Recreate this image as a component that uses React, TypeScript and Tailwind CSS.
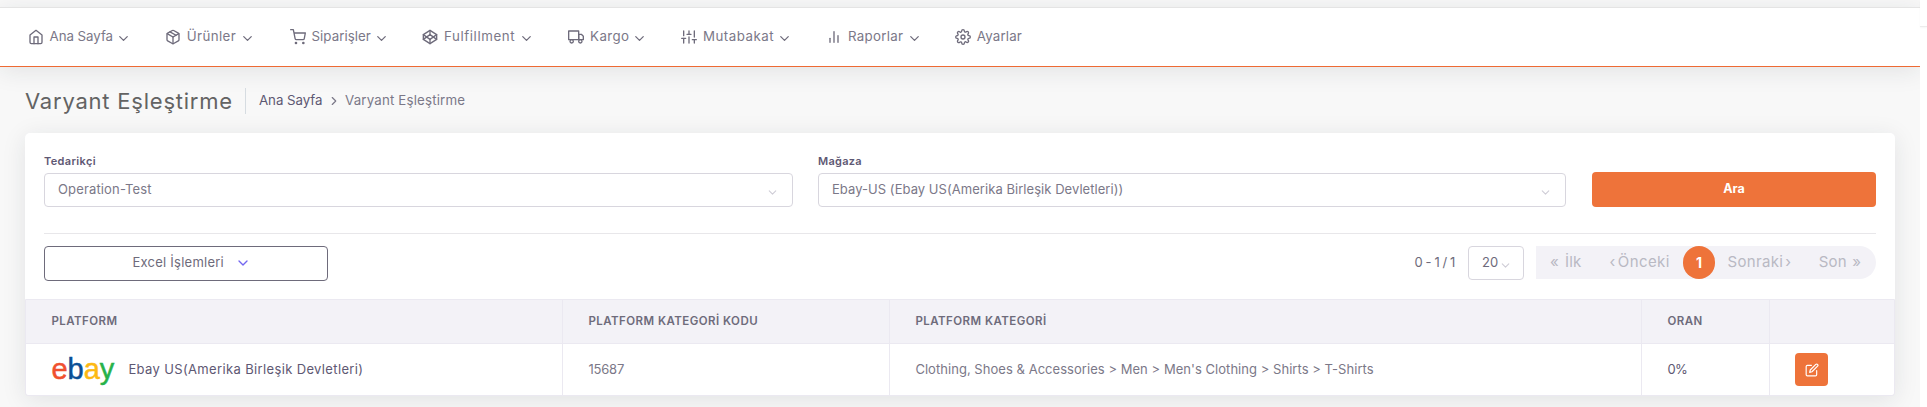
import React from "react";
import {
  FiBarChart2,
  FiChevronDown,
  FiChevronRight,
  FiCodepen,
  FiEdit,
  FiHome,
  FiPackage,
  FiSettings,
  FiShoppingCart,
  FiSliders,
  FiTruck,
} from "react-icons/fi";
import type { IconType } from "react-icons";

type NavEntry = { icon: IconType; label: string; box: string; text: string; menu: boolean };

const nav: NavEntry[] = [
  { icon: FiHome, label: "Ana Sayfa", box: "w-[137.2px]", text: "w-[66.6px] tracking-[-0.06px]", menu: true },
  { icon: FiPackage, label: "Ürünler", box: "w-[124.7px]", text: "w-[53.4px] tracking-[0.4px]", menu: true },
  { icon: FiShoppingCart, label: "Siparişler", box: "w-[132.6px]", text: "w-[62.7px] tracking-[0.05px]", menu: true },
  { icon: FiCodepen, label: "Fulfillment", box: "w-[146px]", text: "w-[75px] tracking-[0.58px]", menu: true },
  { icon: FiTruck, label: "Kargo", box: "w-[112.9px]", text: "w-[42.3px] tracking-[0.38px]", menu: true },
  { icon: FiSliders, label: "Mutabakat", box: "w-[145px]", text: "w-[74.1px] tracking-[0.5px]", menu: true },
  { icon: FiBarChart2, label: "Raporlar", box: "w-[128.8px]", text: "w-[59.2px] tracking-[0.28px]", menu: true },
  { icon: FiSettings, label: "Ayarlar", box: "w-[80px]", text: "tracking-[0.17px]", menu: false },
];

function NavItem({ entry }: { entry: NavEntry }) {
  const Icon = entry.icon;
  return (
    <li className={`flex shrink-0 items-center ${entry.box}`}>
      <Icon className="mr-[5.6px] size-[16px] shrink-0 text-[#6e6b7b]" />
      <span className={`shrink-0 whitespace-nowrap ${entry.text}`}>{entry.label}</span>
      {entry.menu && <FiChevronDown className="relative top-px size-[15px] shrink-0 text-[#6e6b7b]" />}
    </li>
  );
}

function SelectField({ label, value, labelClass, valueClass }: { label: string; value: string; labelClass: string; valueClass: string }) {
  return (
    <div className="flex flex-col">
      <label className={`h-[18px] text-[11px] leading-[13px] font-semibold text-[#5e5873] ${labelClass}`}>{label}</label>
      <div className="flex h-[34px] items-center justify-between rounded-[4px] border border-[#d8d6de] pr-[13px] pl-[13px]">
        <span className={`whitespace-nowrap ${valueClass}`}>{value}</span>
        <FiChevronDown className="relative top-[2px] size-[13px] text-[#cfcdd6]" />
      </div>
    </div>
  );
}

function EbayLogo() {
  return (
    <span className="flex w-[77px] shrink-0 pb-px font-['Liberation_Sans',Arial,sans-serif] text-[29px] leading-[30px] tracking-[0px] [-webkit-text-stroke:0.5px_currentColor]">
      <span className="text-[#f0502f]">e</span>
      <span className="text-[#0a4f96]">b</span>
      <span className="text-[#fdb913]">a</span>
      <span className="text-[#27b24a]">y</span>
    </span>
  );
}

const columns = "grid grid-cols-[537px_327px_752px_128px_1fr]";
const cell = "flex items-center border-r border-[#ebe9f1] pl-[25.4px]";

export default function App() {
  return (
    <div className="flex h-[407px] w-[1927px] overflow-hidden bg-white font-[Inter,'Noto_Sans',sans-serif] text-[13px] text-[#7b7888]">
      <div className="flex h-full w-[1920px] shrink-0 flex-col overflow-hidden bg-[#f8f8f8]">
        <nav className="mt-[7px] h-[60px] shrink-0 border-t border-b border-t-[#e4e4e4] border-b-[#ee6a33] bg-white shadow-[0_4px_24px_0_rgba(34,41,47,0.1)]">
          <ul className="flex h-[58px] items-center pl-[28px] text-[13.3px]">
            {nav.map((entry) => (
              <NavItem key={entry.label} entry={entry} />
            ))}
          </ul>
        </nav>

        <header className="flex h-[66px] shrink-0 items-center pt-[2px] pl-[25px]">
          <h1 className="w-[220px] shrink-0 pb-px text-[22px] leading-[26px] tracking-[0.78px] whitespace-nowrap text-[#636363]">Varyant Eşleştirme</h1>
          <div className="flex h-[26px] items-center border-l border-[#d6dce1] pl-[13px] text-[13.3px]">
            <span className="w-[67.5px] tracking-[-0.05px] whitespace-nowrap text-[#5e5873]">Ana Sayfa</span>
            <FiChevronRight className="mr-[4.5px] size-[14px]" />
            <span className="tracking-[0.17px] whitespace-nowrap">Varyant Eşleştirme</span>
          </div>
        </header>

        <main className="ml-[25px] h-[263px] w-[1870px] shrink-0 rounded-[5px] bg-white shadow-[0_4px_24px_0_rgba(34,41,47,0.1)]">
          <section className="mx-[19px] grid h-[101px] grid-cols-[749px_748px_284px] items-start justify-between border-b border-[#e8e7ea] pt-[22px]">
            <SelectField label="Tedarikçi" value="Operation-Test" labelClass="tracking-[0.35px]" valueClass="tracking-[0.15px]" />
            <div className="-ml-[0.5px] mr-[0.5px]">
              <SelectField
                label="Mağaza"
                value="Ebay-US (Ebay US(Amerika Birleşik Devletleri))"
                labelClass="tracking-[0.28px]"
                valueClass="tracking-[0.05px]"
              />
            </div>
            <button className="mt-[17px] h-[35px] rounded-[4px] bg-[#ee733a] text-[12.5px] font-bold text-white">Ara</button>
          </section>

          <section className="mx-[19px] flex h-[65px] items-start justify-between pt-3">
            <button className="flex h-[35px] w-[284px] items-center rounded-[4px] border border-[#6e6b7b] pb-px pl-[87.5px] tracking-[0.24px] text-[#6e6b7b]">
              <span className="w-[102px] text-left whitespace-nowrap">Excel İşlemleri</span>
              <FiChevronDown className="size-[16px] text-[#7367f0]" />
            </button>
            <div className="flex items-start">
              <span className="w-[53.5px] leading-[33px] tracking-[-0.4px] whitespace-nowrap text-[#6e6b7b]">0 - 1 / 1</span>
              <div className="flex h-[34px] w-[56px] items-center rounded-[4px] border border-[#d8d6de] pb-px pl-[13px] text-[#6e6b7b]">
                <span className="w-[17px]">20</span>
                <FiChevronDown className="relative top-[3px] size-[13px] text-[#cfcdd6]" />
              </div>
              <div className="ml-3 flex h-[33px] w-[340px] items-center rounded-r-[17px] bg-[#f3f2f7] text-[15px] text-[#b9b9c3] *:shrink-0">
                <span className="w-[29px] pb-px pl-[14px]">«</span>
                <span className="w-[44.5px] pb-px tracking-[0.2px]">İlk</span>
                <span className="w-[8.3px] pb-px">‹</span>
                <span className="w-[65.2px] pb-px tracking-[0.4px]">Önceki</span>
                <span className="flex h-[33px] w-[32px] items-center justify-center rounded-full bg-[#ee733a] text-[14px] font-bold text-white">1</span>
                <span className="w-[70.3px] pb-px pl-[12.5px] tracking-[0.35px]">Sonraki</span>
                <span className="w-[33.5px] pb-px">›</span>
                <span className="w-[33.5px] pb-px tracking-[0.2px]">Son</span>
                <span className="pb-px">»</span>
              </div>
            </div>
          </section>

          <div className="rounded-b-[3px] border border-[#ebe9f1]">
            <div className={`${columns} h-[44px] border-b border-[#ebe9f1] bg-[#f3f2f7] text-[11.5px] font-semibold tracking-[0.45px] text-[#6e6b7b]`}>
              <div className={cell}>PLATFORM</div>
              <div className={cell}>PLATFORM KATEGORİ KODU</div>
              <div className={cell}>PLATFORM KATEGORİ</div>
              <div className={cell}>ORAN</div>
              <div />
            </div>
            <div className={`${columns} h-[51px]`}>
              <div className={cell}>
                <EbayLogo />
                <span className="tracking-[0.36px] whitespace-nowrap text-[#5e5873]">Ebay US(Amerika Birleşik Devletleri)</span>
              </div>
              <div className={cell}>
                <span className="tracking-[-0.2px]">15687</span>
              </div>
              <div className={cell}>
                <span className="tracking-[0.04px] whitespace-nowrap">Clothing, Shoes &amp; Accessories &gt; Men &gt; Men's Clothing &gt; Shirts &gt; T-Shirts</span>
              </div>
              <div className={cell}>
                <span className="tracking-[-0.6px] text-[#5e5873]">0%</span>
              </div>
              <div className="flex items-center pl-[25px]">
                <button className="flex size-[33px] items-center justify-center rounded-[4px] bg-[#ee733a] text-white">
                  <FiEdit className="size-[14px]" />
                </button>
              </div>
            </div>
          </div>
        </main>
      </div>

      <aside className="h-[27px] flex-1 border-b border-[#ececec] bg-white shadow-[0_1px_2px_rgba(0,0,0,0.04)]" />
    </div>
  );
}
